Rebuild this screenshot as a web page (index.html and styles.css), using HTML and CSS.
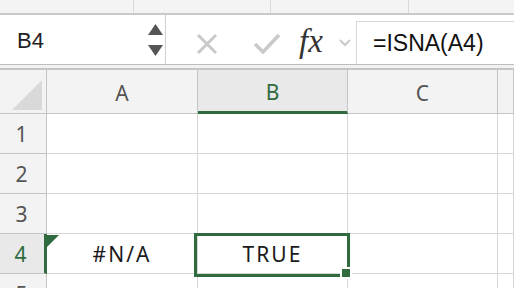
FILE: index.html
```html
<!DOCTYPE html>
<html>
<head>
<meta charset="utf-8">
<link rel="stylesheet" href="styles.css">
</head>
<body>
	<!--ribbon strip above the formula bar-->
	<div class="ribbon">
		<span class="sep s1"></span><span class="sep s2"></span><span class="sep s3"></span>
	</div>

	<!--name box + formula bar-->
	<div class="formula-bar">
		<div class="namebox">
			<span class="ref">B4</span>
			<div class="spin">
				<svg width="15" height="11" viewBox="0 0 15 11"><polygon points="7.5,0 15,11 0,11" fill="#555"/></svg>
				<svg width="15" height="11" viewBox="0 0 15 11"><polygon points="0,0 15,0 7.5,11" fill="#555"/></svg>
			</div>
		</div>
		<div class="actions">
			<svg class="cancel" width="22" height="22" viewBox="0 0 22 22"><path d="M2 2 L20 20 M20 2 L2 20" stroke="#c9c9c9" stroke-width="3" fill="none"/></svg>
			<svg class="enter" width="28" height="21" viewBox="0 0 28 21"><path d="M2 11 L10 19 L26 2" stroke="#c9c9c9" stroke-width="3.5" fill="none"/></svg>
			<span class="fx">fx</span>
			<svg class="chev" width="12" height="8" viewBox="0 0 12 8"><path d="M1 1 L6 6 L11 1" stroke="#c9c9c9" stroke-width="2" fill="none"/></svg>
		</div>
		<div class="formula">=ISNA(A4)</div>
	</div>
	<div class="gap"></div>

	<!--sheet grid-->
	<div class="sheet">
		<div class="hd corner"><span class="tri"></span></div>
		<div class="hd col">A</div>
		<div class="hd col sel-col">B</div>
		<div class="hd col">C</div>
		<div class="hd col"></div>

		<div class="hd row">1</div><div class="cell"></div><div class="cell"></div><div class="cell"></div><div class="cell"></div>
		<div class="hd row">2</div><div class="cell"></div><div class="cell"></div><div class="cell"></div><div class="cell"></div>
		<div class="hd row">3</div><div class="cell"></div><div class="cell"></div><div class="cell"></div><div class="cell"></div>
		<div class="hd row sel-row">4</div>
		<div class="cell val err">#N/A</div>
		<div class="cell val active">TRUE<span class="selbox"><span class="handle"></span></span></div>
		<div class="cell"></div><div class="cell"></div>
		<div class="hd row">5</div><div class="cell"></div><div class="cell"></div><div class="cell"></div><div class="cell"></div>
	</div>
</body>
</html>
```

FILE: styles.css
```css
body {
    margin: 0;
    width: 514px;
    height: 288px;
    overflow: hidden;
    background: #fff;
    font-family: "Liberation Sans", Arial, sans-serif;
}

/* ribbon */
.ribbon {
    height: 13px;
    background: #f4f4f4;
    border-bottom: 2px solid #c9c9c9;
    display: flex;
}
.sep {
    width: 1px;
    background: #dadada;
}
.s1 { margin-left: 133px; }
.s2 { margin-left: 136px; }
.s3 { margin-left: 137px; }

/* formula bar */
.formula-bar {
    height: 49px;
    display: flex;
    border-bottom: 1px solid #bdbdbd;
}
.namebox {
    width: 165px;
    border-right: 1px solid #d0d0d0;
    display: flex;
    align-items: center;
    justify-content: space-between;
}
.ref {
    font-size: 22px;
    color: #222;
    margin-left: 17px;
    margin-top: 2px;
}
.spin {
    display: flex;
    flex-direction: column;
    gap: 10px;
    margin-right: 2px;
    margin-top: 1px;
}
.actions {
    width: 190px;
    display: flex;
    align-items: center;
}
.cancel { margin-left: 30px; margin-top: 8px; }
.enter { margin-left: 35px; margin-top: 8px; }
.fx {
    width: 32px;
    font-family: "Liberation Serif", serif;
    font-style: italic;
    font-size: 33px;
    color: #333;
    margin-left: 18px;
    margin-top: 4px;
}
.chev { margin-left: 8px; margin-top: 6px; }
.formula {
    flex: 1;
    margin-top: 6px;
    border-left: 1px solid #d6d6d6;
    border-top: 1px solid #d6d6d6;
    padding-left: 16px;
    font-size: 23px;
    color: #111;
    display: flex;
    align-items: center;
}
.gap {
    height: 3px;
    background: #f2f2f2;
    border-bottom: 1px solid #c4c4c4;
}

/* grid */
.sheet {
    display: grid;
    grid-template-columns: 47px 151px 150px 150px 1fr;
    grid-template-rows: 44px repeat(5, 40px);
    border-top: 1px solid #c8c8c8;
    font-family: "Noto Sans", sans-serif;
}
.hd {
    background: #f3f3f3;
    color: #555;
    font-size: 21px;
    display: flex;
    align-items: center;
    justify-content: center;
    box-sizing: border-box;
    border-right: 1px solid #c4c4c4;
    border-bottom: 1px solid #c4c4c4;
}
.corner { position: relative; }
.tri {
    position: absolute;
    left: 12px;
    top: 10px;
    width: 0;
    height: 0;
    border-left: 30px solid transparent;
    border-bottom: 30px solid #d9d9d9;
}
.col { padding-top: 2px; }
.row { padding-right: 3px; }
.sel-col {
    background: #e9e9e9;
    color: #2f6b3f;
    border-bottom: 3px solid #2f6b3f;
}
.sel-row {
    background: #e9e9e9;
    color: #2f6b3f;
    border-right: 3px solid #2f6b3f;
}
.cell {
    box-sizing: border-box;
    border-right: 1px solid #d6d6d6;
    border-bottom: 1px solid #d6d6d6;
}
.val {
    display: flex;
    align-items: center;
    justify-content: center;
    font-size: 21px;
    letter-spacing: 2px;
    color: #1a1a1a;
}
.err { position: relative; }
.err::before {
    content: "";
    position: absolute;
    left: 0;
    top: 1px;
    border-top: 12px solid #2f6b3f;
    border-right: 12px solid transparent;
}
.active { position: relative; }
.selbox {
    position: absolute;
    left: -4px;
    top: -1px;
    width: 156px;
    height: 44px;
    box-sizing: border-box;
    border: 3px solid #2f6b3f;
}
.handle {
    position: absolute;
    right: -5px;
    bottom: -5px;
    width: 8px;
    height: 8px;
    background: #2f6b3f;
    border: 2px solid #fff;
}
```
